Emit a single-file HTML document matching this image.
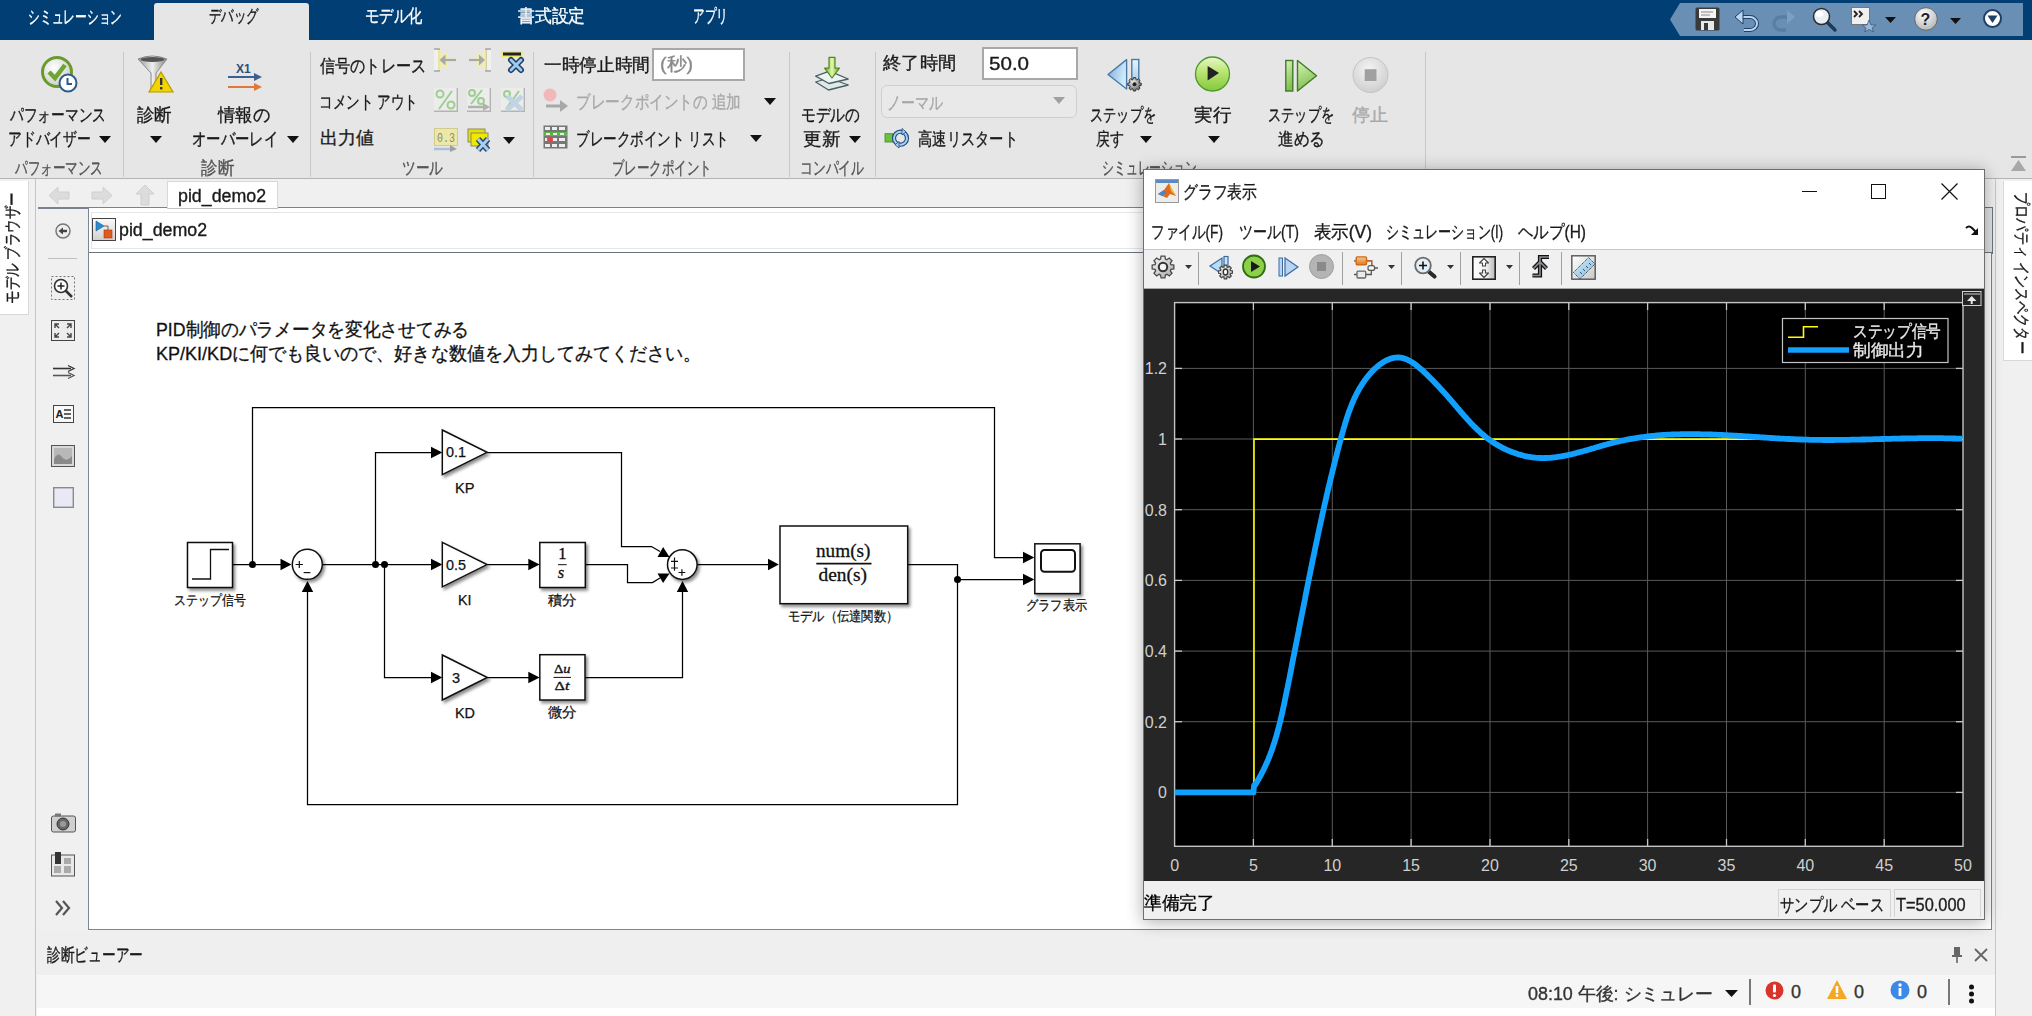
<!DOCTYPE html>
<html><head><meta charset="utf-8">
<style>
html,body{margin:0;padding:0;}
body{width:2032px;height:1016px;position:relative;overflow:hidden;background:#f0f0f0;font-family:"Liberation Sans",sans-serif;}
.a{position:absolute;}
.t{position:absolute;white-space:nowrap;line-height:1;transform-origin:0 0;font-size:18px;color:#1a1a1a;-webkit-text-stroke:0.35px currentColor;}
.g{color:#555;}
.dis{color:#a8a8a8;}
.w{color:#fff;}
svg{position:absolute;overflow:visible;}
</style></head><body>

<!-- ===== TAB BAR ===== -->
<div class="a" style="left:0;top:0;width:2032px;height:40px;background:#003e73"></div>
<div class="a" style="left:154px;top:3px;width:155px;height:37px;background:#e6e6e6;border-radius:3px 3px 0 0"></div>
<div class="t w" style="left: 28px; top: 8px; --w: 94px; transform: scaleX(0.6528);">シミュレーション</div>
<div class="t" style="left: 209px; top: 7px; --w: 50px; transform: scaleX(0.6944);">デバッグ</div>
<div class="t w" style="left: 365px; top: 7px; --w: 57px; transform: scaleX(0.7917);">モデル化</div>
<div class="t w" style="left: 518px; top: 7px; --w: 67px; transform: scaleX(0.9306);">書式設定</div>
<div class="t w" style="left: 693px; top: 7px; --w: 35px; transform: scaleX(0.6481);">アプリ</div>

<!-- quick access -->
<svg style="left:1670px;top:3px" width="353" height="33"><polygon points="0,16.5 10,0 353,0 353,33 10,33" fill="#6a8fb4"></polygon></svg>

<!-- ===== RIBBON ===== -->
<div class="a" style="left:0;top:40px;width:2032px;height:138px;background:#e6e6e6"></div>
<div class="a" style="left:0;top:178px;width:2032px;height:1px;background:#b4b4b4"></div>
<div id="ribbon"></div>
<!-- dividers -->
<div class="a" style="left:123px;top:52px;width:1px;height:125px;background:#c8c8c8"></div>
<div class="a" style="left:310px;top:52px;width:1px;height:125px;background:#c8c8c8"></div>
<div class="a" style="left:533px;top:52px;width:1px;height:125px;background:#c8c8c8"></div>
<div class="a" style="left:789px;top:52px;width:1px;height:125px;background:#c8c8c8"></div>
<div class="a" style="left:875px;top:52px;width:1px;height:125px;background:#c8c8c8"></div>
<div class="a" style="left:1425px;top:52px;width:1px;height:125px;background:#c8c8c8"></div>

<!-- group labels -->
<div class="t g" style="left: 15px; top: 159px; --w: 88px; transform: scaleX(0.6984);">パフォーマンス</div>
<div class="t g" style="left: 201px; top: 159px; --w: 33px; transform: scaleX(0.9167);">診断</div>
<div class="t g" style="left: 402px; top: 159px; --w: 41px; transform: scaleX(0.7593);">ツール</div>
<div class="t g" style="left: 612px; top: 159px; --w: 100px; transform: scaleX(0.6944);">ブレークポイント</div>
<div class="t g" style="left: 800px; top: 159px; --w: 64px; transform: scaleX(0.7111);">コンパイル</div>
<div class="t g" style="left: 1102px; top: 159px; --w: 95px; transform: scaleX(0.6597);">シミュレーション</div>

<!-- パフォーマンス group -->
<svg style="left:41px;top:56px" width="37" height="37" viewBox="0 0 37 37">
 <defs><radialGradient id="pg1" cx="40%" cy="35%" r="65%"><stop offset="0" stop-color="#fff"></stop><stop offset="1" stop-color="#cfcfcf"></stop></radialGradient></defs>
 <circle cx="16" cy="16" r="14.5" fill="url(#pg1)" stroke="#6a9a2c" stroke-width="3"></circle>
 <path d="M8 16 L14 22 L24 9" fill="none" stroke="#6fa530" stroke-width="4.5"></path>
 <circle cx="27" cy="27" r="8.5" fill="#fff" stroke="#2d5c8a" stroke-width="2"></circle>
 <path d="M26.5 22 V28 H31" fill="none" stroke="#2d5c8a" stroke-width="2"></path>
</svg>
<div class="t" style="left: 10px; top: 106px; --w: 96px; transform: scaleX(0.7619);">パフォーマンス</div>
<div class="t" style="left: 8px; top: 129.5px; --w: 83px; transform: scaleX(0.7685);">アドバイザー</div>
<svg style="left:99px;top:136px" width="12" height="7"><polygon points="0,0 12,0 6,7" fill="#111"></polygon></svg>

<!-- 診断 group -->
<svg style="left:137px;top:55px" width="37" height="38" viewBox="0 0 37 38">
 <defs><linearGradient id="fg1" x1="0" x2="1"><stop offset="0" stop-color="#9a9a9a"></stop><stop offset="0.5" stop-color="#eee"></stop><stop offset="1" stop-color="#888"></stop></linearGradient></defs>
 <path d="M1 4 Q15 -2 30 4 L19 18 L19 35 L14 35 L14 18 Z" fill="url(#fg1)" stroke="#8a8a8a" stroke-width="1"></path>
 <ellipse cx="15.5" cy="4.5" rx="12" ry="2.5" fill="#555"></ellipse>
 <polygon points="24,17 36,37 12,37" fill="#f2d500" stroke="#b89a00" stroke-width="1.2"></polygon>
 <rect x="23" y="23" width="2.4" height="7" fill="#333"></rect><rect x="23" y="32" width="2.4" height="2.4" fill="#333"></rect>
</svg>
<div class="t" style="left: 137px; top: 106px; --w: 35px; transform: scaleX(0.9722);">診断</div>
<svg style="left:150px;top:136px" width="12" height="7"><polygon points="0,0 12,0 6,7" fill="#111"></polygon></svg>
<svg style="left:228px;top:62px" width="34" height="30" viewBox="0 0 34 30">
 <text x="8" y="11" font-family="Liberation Sans" font-size="12" font-weight="bold" fill="#2d4f7c">X1</text>
 <line x1="0" y1="15" x2="29" y2="15" stroke="#3b5f93" stroke-width="2"></line><polygon points="26,11 34,15 26,19" fill="#3b5f93"></polygon>
 <line x1="0" y1="25" x2="29" y2="25" stroke="#e07838" stroke-width="2"></line><polygon points="26,21 34,25 26,29" fill="#e07838"></polygon>
</svg>
<div class="t" style="left: 218px; top: 106px; --w: 52px; transform: scaleX(0.963);">情報の</div>
<div class="t" style="left: 192px; top: 129.5px; --w: 86px; transform: scaleX(0.7963);">オーバーレイ</div>
<svg style="left:287px;top:136px" width="12" height="7"><polygon points="0,0 12,0 6,7" fill="#111"></polygon></svg>

<!-- ツール group -->
<div class="t" style="left: 320px; top: 57px; --w: 106px; transform: scaleX(0.8413);">信号のトレース</div>
<div class="t" style="left: 319px; top: 93px; --w: 99px; transform: scaleX(0.7557);">コメント アウト</div>
<div class="t" style="left: 320px; top: 129.4px; --w: 54px; transform: scaleX(1);">出力値</div>
<svg style="left:434px;top:48px" width="24" height="24" viewBox="0 0 24 24">
 <rect x="0" y="1" width="5" height="22" fill="#f0f0f0"></rect>
 <path d="M0 1 H5 V23 H0" fill="none" stroke="#a4a4a4" stroke-width="1.6"></path>
 <g stroke="#f4f0a0" stroke-width="3" stroke-linejoin="round" opacity="0.85"><line x1="10" y1="12" x2="22" y2="12"></line><polygon points="5.5,12 11.5,6 11.5,18" fill="#f4f0a0"></polygon><line x1="5.5" y1="2" x2="5.5" y2="22"></line></g>
 <line x1="10" y1="12" x2="22" y2="12" stroke="#a8a8a8" stroke-width="2.2"></line><polygon points="5.5,12 11.5,6.5 11.5,17.5" fill="#a8a8a8"></polygon>
</svg>
<svg style="left:467px;top:48px" width="24" height="24" viewBox="0 0 24 24">
 <rect x="19" y="1" width="5" height="22" fill="#f0f0f0"></rect>
 <path d="M24 1 H19 V23 H24" fill="none" stroke="#a4a4a4" stroke-width="1.6"></path>
 <g stroke="#f4f0a0" stroke-width="3" stroke-linejoin="round" opacity="0.85"><line x1="2" y1="12" x2="13" y2="12"></line><polygon points="18,12 12,6 12,18" fill="#f4f0a0"></polygon><line x1="18" y1="2" x2="18" y2="22"></line></g>
 <line x1="2" y1="12" x2="13" y2="12" stroke="#a8a8a8" stroke-width="2.2"></line><polygon points="18,12 12,6.5 12,17.5" fill="#a8a8a8"></polygon>
</svg>
<svg style="left:501px;top:50px" width="24" height="22" viewBox="0 0 24 22">
 <rect x="0.5" y="1" width="21" height="6" rx="1.5" fill="#f0e860" opacity="0.9"></rect>
 <rect x="2" y="2.5" width="18" height="3" fill="#222"></rect>
 <path d="M10 10 L20 20 M20 10 L10 20" stroke="#1e3a60" stroke-width="6" stroke-linecap="round"></path>
 <path d="M10 10 L20 20 M20 10 L10 20" stroke="#9ccbec" stroke-width="3" stroke-linecap="round"></path>
</svg>
<svg style="left:434px;top:88px" width="24" height="24" viewBox="0 0 24 24">
 <rect x="0" y="0" width="23.5" height="23.5" fill="#ececec"></rect><path d="M23.3 0 V23.3 H0" fill="none" stroke="#b4b4b4" stroke-width="1.4"></path>
 <circle cx="6" cy="6" r="3.5" fill="none" stroke="#9ccf90" stroke-width="2"></circle><circle cx="17" cy="17" r="3.5" fill="none" stroke="#9ccf90" stroke-width="2"></circle><line x1="18" y1="3" x2="5" y2="21" stroke="#9ccf90" stroke-width="2"></line>
</svg>
<svg style="left:467px;top:88px" width="24" height="24" viewBox="0 0 24 24">
 <rect x="0" y="0" width="23.5" height="23.5" fill="#ececec"></rect><path d="M23.3 0 V23.3 H0" fill="none" stroke="#b4b4b4" stroke-width="1.4"></path>
 <circle cx="5" cy="5" r="3" fill="none" stroke="#9ccf90" stroke-width="2"></circle><circle cx="14" cy="13" r="3" fill="none" stroke="#9ccf90" stroke-width="2"></circle><line x1="15" y1="2" x2="4" y2="16" stroke="#9ccf90" stroke-width="2"></line>
 <line x1="1" y1="19" x2="18" y2="19" stroke="#b0b0b0" stroke-width="2.5"></line><polygon points="23,19 16,15 16,23" fill="#b0b0b0"></polygon>
</svg>
<svg style="left:501px;top:88px" width="24" height="24" viewBox="0 0 24 24">
 <rect x="0" y="0" width="23.5" height="23.5" fill="#ececec"></rect><path d="M23.3 0 V23.3 H0" fill="none" stroke="#b4b4b4" stroke-width="1.4"></path>
 <circle cx="6" cy="6" r="3" fill="none" stroke="#9ccf90" stroke-width="2"></circle><line x1="18" y1="3" x2="5" y2="21" stroke="#9ccf90" stroke-width="2"></line>
 <path d="M6 8 L21 22 M21 8 L6 22" stroke="#c0d4e4" stroke-width="5"></path>
</svg>
<svg style="left:434px;top:128px" width="24" height="24" viewBox="0 0 24 24">
 <rect x="0.5" y="0.5" width="23" height="17" fill="#ece8a8" stroke="#d0cc90"></rect>
 <text x="3" y="14" font-family="Liberation Mono" font-size="13" fill="#8a8a70" textLength="18" lengthAdjust="spacingAndGlyphs">0.3</text>
 <line x1="0" y1="21" x2="18" y2="21" stroke="#a8c0d8" stroke-width="2.5"></line><polygon points="23,21 16,17 16,24" fill="#a0a0a0"></polygon>
</svg>
<svg style="left:467px;top:128px" width="24" height="24" viewBox="0 0 24 24">
 <rect x="1" y="1" width="17" height="13" fill="#e8e000" stroke="#8a8a60"></rect>
 <rect x="4" y="5" width="17" height="13" fill="#f0e800" stroke="#8a8a60"></rect>
 <path d="M11 11 L21 22 M21 11 L11 22" stroke="#2a4a70" stroke-width="6"></path><path d="M11 11 L21 22 M21 11 L11 22" stroke="#a8cff0" stroke-width="3"></path>
</svg>
<svg style="left:503px;top:137px" width="12" height="7"><polygon points="0,0 12,0 6,7" fill="#111"></polygon></svg>

<!-- ブレークポイント group -->
<div class="t" style="left: 544px; top: 55.6px; --w: 106px; transform: scaleX(0.9815);">一時停止時間</div>
<div class="a" style="left:652px;top:48px;width:93px;height:33px;background:#fff;border:2px solid #a8a8a8;box-sizing:border-box"></div>
<div class="t" style="left: 660px; top: 55px; color: rgb(138, 138, 138); --w: 33px; transform: scaleX(1.1);">(秒)</div>
<svg style="left:543px;top:88px" width="26" height="26" viewBox="0 0 26 26">
 <circle cx="7" cy="7" r="6.5" fill="#f0b8b8"></circle>
 <line x1="3" y1="18" x2="19" y2="18" stroke="#a8a8a8" stroke-width="3"></line><polygon points="25,18 17,12 17,24" fill="#a8a8a8"></polygon>
</svg>
<div class="t dis" style="left: 576px; top: 92.8px; --w: 165px; transform: scaleX(0.8128);">ブレークポイントの 追加</div>
<svg style="left:764px;top:98px" width="12" height="7"><polygon points="0,0 12,0 6,7" fill="#111"></polygon></svg>
<svg style="left:543px;top:125px" width="25" height="24" viewBox="0 0 25 24">
 <rect x="0.5" y="0.5" width="24" height="23" fill="#777"></rect>
 <g fill="#eee"><rect x="2" y="2" width="5" height="3"></rect><rect x="9" y="2" width="5" height="3"></rect><rect x="16" y="2" width="6" height="3"></rect>
 <rect x="2" y="13" width="5" height="3"></rect><rect x="9" y="13" width="5" height="3"></rect><rect x="16" y="13" width="6" height="3"></rect>
 <rect x="2" y="19" width="5" height="3"></rect><rect x="9" y="19" width="5" height="3"></rect><rect x="16" y="19" width="6" height="3"></rect></g>
 <rect x="1" y="7" width="23" height="4" fill="#5ab548"></rect>
 <g fill="#eee"><rect x="3" y="8" width="4" height="2"></rect><rect x="10" y="8" width="4" height="2"></rect><rect x="17" y="8" width="4" height="2"></rect></g>
 <circle cx="7" cy="14.5" r="3" fill="#e04848"></circle>
</svg>
<div class="t" style="left: 576px; top: 130px; --w: 153px; transform: scaleX(0.7537);">ブレークポイント リスト</div>
<svg style="left:750px;top:135px" width="12" height="7"><polygon points="0,0 12,0 6,7" fill="#111"></polygon></svg>

<!-- コンパイル group -->
<svg style="left:814px;top:56px" width="36" height="36" viewBox="0 0 36 36">
 <defs><linearGradient id="um1" x1="0" x2="1"><stop offset="0" stop-color="#6aa828"></stop><stop offset="0.5" stop-color="#e4f8b0"></stop><stop offset="1" stop-color="#6aa828"></stop></linearGradient></defs>
 <polygon points="1.7,26 15,22 34.2,29 14.5,34" fill="#dfe8ea" stroke="#4a6060" stroke-width="1.3" stroke-linejoin="round"></polygon>
 <polygon points="1.7,20.1 15.5,15.2 34.2,23 15,27.5" fill="#eef3f4" stroke="#4a6060" stroke-width="1.3" stroke-linejoin="round"></polygon>
 <polygon points="15,1.4 21,1.4 21,12.2 25.4,12.2 18,22 10.6,12.2 15,12.2" fill="url(#um1)" stroke="#4a8a18" stroke-width="1.2" stroke-linejoin="round"></polygon>
</svg>
<div class="t" style="left: 801px; top: 105.6px; --w: 59px; transform: scaleX(0.8194);">モデルの</div>
<div class="t" style="left: 803px; top: 129.5px; --w: 37px; transform: scaleX(1.0278);">更新</div>
<svg style="left:849px;top:136px" width="12" height="7"><polygon points="0,0 12,0 6,7" fill="#111"></polygon></svg>

<!-- 終了時間 -->
<div class="t" style="left: 883px; top: 54.4px; --w: 73px; transform: scaleX(1.0139);">終了時間</div>
<div class="a" style="left:982px;top:47px;width:96px;height:33px;background:#fff;border:2px solid #a8a8a8;box-sizing:border-box"></div>
<div class="t" style="left: 989px; top: 55px; --w: 40px; transform: scaleX(1.1429);">50.0</div>
<div class="a" style="left:881px;top:85px;width:196px;height:33px;background:#e9e9e9;border:1.5px solid #cfcfcf;border-radius:6px;box-sizing:border-box"></div>
<div class="t dis" style="left: 887px; top: 94px; --w: 56px; transform: scaleX(0.7778);">ノーマル</div>
<svg style="left:1053px;top:97px" width="12" height="7"><polygon points="0,0 12,0 6,7" fill="#a0a0a0"></polygon></svg>
<svg style="left:885px;top:128px" width="25" height="21" viewBox="0 0 25 21">
 <rect x="0" y="5.7" width="8" height="8.3" fill="#6cc040" stroke="#3a8a20" stroke-width="0.8"></rect>
 <circle cx="15.5" cy="10.2" r="6.5" fill="none" stroke="#1e4a80" stroke-width="4.2"></circle>
 <circle cx="15.5" cy="10.2" r="6.5" fill="none" stroke="#a8d0f0" stroke-width="2"></circle>
 <polygon points="17,0.5 21,3.8 17,7" fill="#a8d0f0" stroke="#1e4a80" stroke-width="0.8"></polygon>
 <polygon points="14,13.5 10,16.7 14,20" fill="#a8d0f0" stroke="#1e4a80" stroke-width="0.8"></polygon>
</svg>
<div class="t" style="left: 918px; top: 130px; --w: 100px; transform: scaleX(0.7937);">高速リスタート</div>

<!-- シミュレーション group -->
<svg style="left:1106px;top:58px" width="38" height="34" viewBox="0 0 38 34">
 <defs><linearGradient id="sb1" x1="0" y1="0" x2="1" y2="0.3"><stop offset="0" stop-color="#7aaee0"></stop><stop offset="1" stop-color="#d4ecfa"></stop></linearGradient>
 <linearGradient id="sb2" x1="0" y1="0" x2="0" y2="1"><stop offset="0" stop-color="#e8f4fc"></stop><stop offset="1" stop-color="#9cc8ea"></stop></linearGradient>
 <radialGradient id="sbg" cx="40%" cy="35%" r="70%"><stop offset="0" stop-color="#f0f0f0"></stop><stop offset="1" stop-color="#606060"></stop></radialGradient></defs>
 <polygon points="2,16.5 20.6,1.6 20.6,31" fill="url(#sb1)" stroke="#4a7aa8" stroke-width="1.4" stroke-linejoin="round"></polygon>
 <rect x="25.8" y="1.5" width="7" height="27" fill="url(#sb2)" stroke="#4a7aa8" stroke-width="1.4"></rect>
 <path d="M33.28 24.83 L35.19 25.10 L35.19 27.50 L33.28 27.77 L32.92 28.64 L34.08 30.19 L32.39 31.88 L30.84 30.72 L29.97 31.08 L29.70 32.99 L27.30 32.99 L27.03 31.08 L26.16 30.72 L24.61 31.88 L22.92 30.19 L24.08 28.64 L23.72 27.77 L21.81 27.50 L21.81 25.10 L23.72 24.83 L24.08 23.96 L22.92 22.41 L24.61 20.72 L26.16 21.88 L27.03 21.52 L27.30 19.61 L29.70 19.61 L29.97 21.52 L30.84 21.88 L32.39 20.72 L34.08 22.41 L32.92 23.96 Z" fill="url(#sbg)" stroke="#333" stroke-width="1"></path>
 <circle cx="28.5" cy="26.3" r="2" fill="#222"></circle>
</svg>
<div class="t" style="left: 1090px; top: 105.5px; --w: 66px; transform: scaleX(0.7333);">ステップを</div>
<div class="t" style="left: 1096px; top: 129.5px; --w: 28px; transform: scaleX(0.7778);">戻す</div>
<svg style="left:1140px;top:136px" width="12" height="7"><polygon points="0,0 12,0 6,7" fill="#111"></polygon></svg>
<svg style="left:1194px;top:56px" width="38" height="38" viewBox="0 0 38 38">
 <defs><linearGradient id="rg1" x1="0" y1="0" x2="0" y2="1"><stop offset="0" stop-color="#e8f8c8"></stop><stop offset="0.45" stop-color="#b8e470"></stop><stop offset="1" stop-color="#84c83c"></stop></linearGradient></defs>
 <circle cx="18.5" cy="18" r="17" fill="url(#rg1)" stroke="#4a9a2a" stroke-width="1.3"></circle>
 <polygon points="13.6,10 25,17 13.6,24.5" fill="#222"></polygon>
</svg>
<div class="t" style="left: 1194px; top: 105.6px; --w: 37px; transform: scaleX(1.0278);">実行</div>
<svg style="left:1208px;top:136px" width="12" height="7"><polygon points="0,0 12,0 6,7" fill="#111"></polygon></svg>
<svg style="left:1284px;top:59px" width="34" height="34" viewBox="0 0 34 34">
 <defs><linearGradient id="sf1" x1="0" y1="0" x2="0.3" y2="1"><stop offset="0" stop-color="#d8f4b8"></stop><stop offset="1" stop-color="#80c050"></stop></linearGradient></defs>
 <rect x="1.8" y="1.5" width="7" height="30.5" fill="url(#sf1)" stroke="#3e7a28" stroke-width="1.4"></rect>
 <polygon points="13.5,1.5 32.5,16.7 13.5,32" fill="url(#sf1)" stroke="#3e7a28" stroke-width="1.4" stroke-linejoin="round"></polygon>
</svg>
<div class="t" style="left: 1268px; top: 105.5px; --w: 66px; transform: scaleX(0.7333);">ステップを</div>
<div class="t" style="left: 1278px; top: 130px; --w: 47px; transform: scaleX(0.8704);">進める</div>
<svg style="left:1352px;top:57px" width="38" height="37" viewBox="0 0 38 37">
 <defs><radialGradient id="st1" cx="45%" cy="35%" r="65%"><stop offset="0" stop-color="#f4f4f4"></stop><stop offset="1" stop-color="#cfcfcf"></stop></radialGradient></defs>
 <circle cx="18.5" cy="18" r="17.5" fill="url(#st1)" stroke="#c4c4c4" stroke-width="1"></circle>
 <rect x="12.7" y="12.2" width="11.8" height="11.8" fill="#a0a0a0"></rect>
</svg>
<div class="t dis" style="left: 1352px; top: 105.5px; --w: 36px; transform: scaleX(1);">停止</div>

<!-- collapse ribbon icon -->
<svg style="left:2010px;top:156px" width="17" height="16" viewBox="0 0 17 16"><rect x="1" y="0" width="15" height="2" fill="#9a9a9a"></rect><polygon points="8.5,4 16,15 1,15" fill="#a8a8a8"></polygon></svg>


<!-- ===== LEFT TAB ===== -->
<div class="a" style="left:0;top:181px;width:28px;height:133px;background:#fff;border-right:1px solid #d8d8d8;border-bottom:1px solid #d8d8d8"></div>
<div class="a" style="left:35px;top:179px;width:1px;height:837px;background:#c4c4c4"></div>

<!-- ===== EDITOR ===== -->
<div class="a" style="left:36px;top:179px;width:1960px;height:28px;background:#f0f0f0"></div>
<div class="a" style="left:38px;top:207px;width:1955px;height:2px;background:#7a8290"></div>
<div class="a" style="left:167px;top:181px;width:111px;height:28px;background:#fff;border:1px solid #d8d8d8;border-bottom:1px solid #c4c4c4;box-sizing:border-box;z-index:1"></div>
<div class="t" style="left: 178px; top: 187px; font-size: 18px; --w: 88px; z-index: 2; transform: scaleX(0.9888);">pid_demo2</div>
<!-- address bar -->
<div class="a" style="left:88px;top:208px;width:1905px;height:45px;background:#fff;border-left:1px solid #7d8591;box-sizing:border-box"></div>
<div class="a" style="left:91px;top:212px;width:1890px;height:37px;border:1px solid #e6e6e6;border-right:none;box-sizing:border-box"></div>
<div class="a" style="left:1984px;top:207px;width:9px;height:46px;background:#e2e2e2;border:1.5px solid #6e7682;border-left:none;box-sizing:border-box"></div>
<div class="a" style="left:89px;top:252px;width:1904px;height:2px;background:#6b7380"></div>
<div class="t" style="left: 119px; top: 221px; font-size: 18px; --w: 88px; transform: scaleX(0.9888);">pid_demo2</div>
<!-- canvas -->
<div class="a" style="left:88px;top:253px;width:1904px;height:677px;background:#fff;border-left:1px solid #7d8591;border-right:1px solid #7d8591;border-bottom:1px solid #7d8591;box-sizing:border-box"></div>

<!-- ===== RIGHT TAB ===== -->
<div class="a" style="left:1995px;top:179px;width:1px;height:837px;background:#c8c8c8"></div>
<div class="a" style="left:2003px;top:181px;width:29px;height:180px;background:#fff;border-left:1px solid #d8d8d8;border-bottom:1px solid #d8d8d8;box-sizing:border-box"></div>

<!-- ===== DIAGNOSTIC VIEWER ===== -->
<div class="a" style="left:36px;top:930px;width:1959px;height:45px;background:#efefef"></div>
<div class="a" style="left:37px;top:975px;width:1958px;height:33px;background:#f6f6f6"></div>
<div class="a" style="left:37px;top:1008px;width:1958px;height:8px;background:#fff"></div>
<div class="t" style="left: 47px; top: 946px; font-size: 18px; --w: 96px; transform: scaleX(0.7619);">診断ビューアー</div>

<!-- QAT icons -->
<svg style="left:1695px;top:7px" width="25" height="24" viewBox="0 0 25 24">
 <rect x="0.5" y="0.5" width="24" height="23" rx="1.5" fill="#3a3a3a"></rect>
 <rect x="4" y="2" width="17" height="9" fill="#f4f4f4"></rect><line x1="6" y1="5" x2="18" y2="5" stroke="#888"></line><line x1="6" y1="8" x2="15" y2="8" stroke="#888"></line>
 <rect x="6" y="14" width="13" height="9" fill="#e8e8e8"></rect><rect x="9" y="16" width="4" height="7" fill="#3a3a3a"></rect>
</svg>
<svg style="left:1735px;top:10px" width="24" height="20" viewBox="0 0 24 20">
 <path d="M4 7 H15 A7 6.5 0 0 1 15 20 H9" fill="none" stroke="#1e3f66" stroke-width="4"></path>
 <path d="M4 7 H15 A7 6.5 0 0 1 15 20 H9" fill="none" stroke="#b8d8f4" stroke-width="2"></path>
 <polygon points="0,7 8,0 8,14" fill="#b8d8f4" stroke="#1e3f66" stroke-width="1"></polygon>
</svg>
<svg style="left:1773px;top:10px" width="22" height="20" viewBox="0 0 22 20" opacity="0.5">
 <path d="M18 7 H8 A7 6.5 0 0 0 8 20 H13" fill="none" stroke="#4a6f96" stroke-width="3.5"></path>
 <polygon points="22,7 14,0 14,14" fill="#8fb0d0"></polygon>
</svg>
<svg style="left:1812px;top:7px" width="25" height="25" viewBox="0 0 25 25">
 <line x1="14" y1="14" x2="23" y2="23" stroke="#1e3a5a" stroke-width="3.5" stroke-linecap="round"></line>
 <circle cx="9.5" cy="9.5" r="8" fill="#e8eef4" stroke="#2a2a2a" stroke-width="1.5"></circle>
 <ellipse cx="7.5" cy="7" rx="4" ry="3" fill="#fff"></ellipse>
</svg>
<svg style="left:1851px;top:7px" width="25" height="25" viewBox="0 0 25 25">
 <rect x="0.5" y="0.5" width="18" height="17" fill="#f0f0f0" stroke="#777"></rect>
 <path d="M3 4 L6 7 L3 10 M8 4 L11 7 L8 10" fill="none" stroke="#222" stroke-width="1.8"></path>
 <polygon points="18,13 20,18 25,18 21,21 22.5,25 18,22.5 13.5,25 15,21 11,18 16,18" fill="#9ab8d8" stroke="#3a5a80" stroke-width="0.8"></polygon>
</svg>
<svg style="left:1885px;top:17px" width="11" height="6"><polygon points="0,0 11,0 5.5,6" fill="#111"></polygon></svg>
<svg style="left:1914px;top:7px" width="24" height="24" viewBox="0 0 24 24">
 <defs><radialGradient id="hq1" cx="40%" cy="30%" r="70%"><stop offset="0" stop-color="#fff"></stop><stop offset="1" stop-color="#b8b8b8"></stop></radialGradient></defs>
 <circle cx="12" cy="12" r="11.3" fill="url(#hq1)" stroke="#555" stroke-width="0.8"></circle>
 <text x="6.5" y="18" font-family="Liberation Sans" font-weight="bold" font-size="16" fill="#222">?</text>
</svg>
<svg style="left:1950px;top:18px" width="11" height="6"><polygon points="0,0 11,0 5.5,6" fill="#111"></polygon></svg>
<svg style="left:1983px;top:9px" width="19" height="19" viewBox="0 0 19 19">
 <circle cx="9.5" cy="9.5" r="8.5" fill="#fff" stroke="#1e3f66" stroke-width="2"></circle>
 <polygon points="4.5,6.5 14.5,6.5 9.5,14" fill="#1e3f66"></polygon>
</svg>

<!-- left tab text (vertical) -->
<div class="a" style="left:4px;top:304px;transform:rotate(-90deg);transform-origin:0 0"><div class="t" style="left: 0px; top: 0px; font-size: 17px; --w: 112px; transform: scaleX(0.7943);">モデル ブラウザー</div></div>

<!-- breadcrumb arrows -->
<svg style="left:49px;top:187px" width="21" height="17" viewBox="0 0 21 17"><polygon points="0,8.5 9,0 9,5 20,5 20,12 9,12 9,17" fill="#dcdcdc" stroke="#cfcfcf"></polygon></svg>
<svg style="left:91px;top:187px" width="21" height="17" viewBox="0 0 21 17"><polygon points="21,8.5 12,0 12,5 1,5 1,12 12,12 12,17" fill="#dcdcdc" stroke="#cfcfcf"></polygon></svg>
<svg style="left:136px;top:185px" width="18" height="20" viewBox="0 0 18 20"><polygon points="9,0 18,9 13,9 13,20 5,20 5,9 0,9" fill="#dcdcdc" stroke="#cfcfcf"></polygon></svg>

<!-- address bar icons -->
<svg style="left:55px;top:223px" width="16" height="16" viewBox="0 0 16 16"><circle cx="8" cy="8" r="7" fill="#eee" stroke="#777" stroke-width="1.5"></circle><polygon points="3.5,8 8,4.5 8,11.5" fill="#444"></polygon><rect x="7" y="6.8" width="5" height="2.4" fill="#444"></rect></svg>
<div class="a" style="left:91px;top:212px;width:1px;height:36px;background:#e4e4e4"></div>
<svg style="left:92px;top:218px" width="25" height="24" viewBox="0 0 25 24">
 <defs><linearGradient id="mi1" x1="0" y1="0" x2="0" y2="1"><stop offset="0" stop-color="#fafafa"></stop><stop offset="1" stop-color="#d0d0d0"></stop></linearGradient></defs>
 <rect x="0.5" y="0.5" width="23" height="22" fill="url(#mi1)" stroke="#444"></rect>
 <polygon points="4,3 12,8 4,13" fill="#2a8ad0" stroke="#1a5a90" stroke-width="0.6"></polygon><path d="M12 8 H16 V12" fill="none" stroke="#444" stroke-width="0.8"></path>
 <rect x="12" y="12" width="8" height="8" fill="#e05a1a" stroke="#a03a10" stroke-width="0.6"></rect>
</svg>

<!-- palette -->
<div class="a" style="left:48px;top:258px;width:29px;height:1px;background:#c0c0c0"></div>
<svg style="left:51px;top:276px" width="25" height="25" viewBox="0 0 25 25">
 <rect x="0.5" y="0.5" width="23" height="23" fill="none" stroke="#777" stroke-dasharray="2,2"></rect>
 <line x1="13" y1="13" x2="21" y2="21" stroke="#333" stroke-width="2.5"></line>
 <circle cx="10" cy="10" r="6.5" fill="#fff" stroke="#333" stroke-width="1.6"></circle>
 <path d="M10 6.5 V13.5 M6.5 10 H13.5" stroke="#222" stroke-width="1.5"></path>
</svg>
<svg style="left:51px;top:320px" width="24" height="21" viewBox="0 0 24 21">
 <rect x="0.5" y="0.5" width="23" height="20" fill="#ececec" stroke="#444"></rect>
 <path d="M4 8 V4 H8 M4 4 L8 8 M20 8 V4 H16 M20 4 L16 8 M4 13 V17 H8 M4 17 L8 13 M20 13 V17 H16 M20 17 L16 13" fill="none" stroke="#444" stroke-width="1.4"></path>
</svg>
<svg style="left:53px;top:365px" width="22" height="15" viewBox="0 0 22 15">
 <line x1="0" y1="3.5" x2="18" y2="3.5" stroke="#333" stroke-width="1.6"></line><path d="M15 0.5 L21 3.5 L15 6.5" fill="none" stroke="#333" stroke-width="1.3"></path>
 <line x1="0" y1="10.5" x2="18" y2="10.5" stroke="#555" stroke-width="1.6"></line><path d="M15 7.5 L21 10.5 L15 13.5" fill="none" stroke="#555" stroke-width="1.3"></path>
</svg>
<svg style="left:53px;top:405px" width="21" height="18" viewBox="0 0 21 18">
 <rect x="0.5" y="0.5" width="20" height="17" fill="#f8f8f8" stroke="#444"></rect>
 <text x="2.5" y="13" font-family="Liberation Sans" font-weight="bold" font-size="11" fill="#222">A</text>
 <path d="M11 5 H18 M11 9 H18 M11 13 H18" stroke="#333" stroke-width="1.3"></path>
</svg>
<svg style="left:51px;top:445px" width="24" height="22" viewBox="0 0 24 22">
 <rect x="0.5" y="0.5" width="23" height="21" fill="#d8d8d8" stroke="#555"></rect>
 <rect x="3" y="3" width="18" height="16" fill="#b8b8b8"></rect>
 <path d="M3 14 Q7 6 11 12 T21 11 V19 H3 Z" fill="#8a8a8a"></path>
</svg>
<svg style="left:53px;top:487px" width="21" height="21" viewBox="0 0 21 21"><rect x="0.7" y="0.7" width="19.6" height="19.6" fill="#e8e8f6" stroke="#8a8a8a" stroke-width="1.4"></rect></svg>
<svg style="left:51px;top:813px" width="25" height="20" viewBox="0 0 25 20">
 <rect x="0.5" y="3" width="24" height="16" rx="2" fill="#d0d0d0" stroke="#555"></rect>
 <rect x="4" y="0.5" width="6" height="3" fill="#777"></rect>
 <circle cx="12" cy="11" r="6" fill="#666" stroke="#333"></circle><circle cx="12" cy="11" r="3" fill="#999"></circle>
</svg>
<svg style="left:51px;top:852px" width="25" height="25" viewBox="0 0 25 25">
 <rect x="0.5" y="3" width="23" height="21" fill="#e8e8e8" stroke="#555"></rect>
 <rect x="4" y="0" width="6" height="12" fill="#333"></rect><rect x="3" y="14" width="7" height="7" fill="#aaa"></rect>
 <rect x="13" y="6" width="7" height="6" fill="#aaa"></rect><rect x="13" y="14" width="7" height="7" fill="#aaa"></rect>
</svg>
<svg style="left:55px;top:900px" width="16" height="16" viewBox="0 0 16 16"><path d="M1 1 L7 8 L1 15 M8 1 L14 8 L8 15" fill="none" stroke="#555" stroke-width="2.2"></path></svg>

<!-- right tab text (vertical) -->
<div class="a" style="left:2030px;top:192px;transform:rotate(90deg);transform-origin:0 0"><div class="t" style="left: 0px; top: 0px; font-size: 17px; --w: 162px; transform: scaleX(0.7751);">プロパティ インスペクター</div></div>

<!-- diagnostic viewer icons -->
<svg style="left:1951px;top:947px" width="12" height="16" viewBox="0 0 12 16"><rect x="3" y="0" width="6" height="9" fill="#666"></rect><rect x="1" y="8" width="10" height="2" fill="#666"></rect><rect x="5.2" y="10" width="1.6" height="6" fill="#666"></rect></svg>
<svg style="left:1974px;top:948px" width="14" height="14" viewBox="0 0 14 14"><path d="M1 1 L13 13 M13 1 L1 13" stroke="#666" stroke-width="1.8"></path></svg>
<div class="t" style="left: 1528px; top: 985px; font-size: 18px; color: rgb(51, 51, 51); --w: 185px; transform: scaleX(0.9946);">08:10 午後: シミュレー</div>
<svg style="left:1725px;top:990px" width="13" height="7"><polygon points="0,0 13,0 6.5,7" fill="#111"></polygon></svg>
<div class="a" style="left:1749px;top:979px;width:2px;height:26px;background:#777"></div>
<svg style="left:1765px;top:981px" width="19" height="19" viewBox="0 0 19 19"><circle cx="9.5" cy="9.5" r="9" fill="#d9342b"></circle><rect x="8" y="3.5" width="3" height="8" rx="1" fill="#fff"></rect><circle cx="9.5" cy="14.5" r="1.6" fill="#fff"></circle></svg>
<div class="t" style="left: 1791px; top: 983px; font-size: 18px; color: rgb(51, 51, 51); --w: 10px; transform: scaleX(1);">0</div>
<svg style="left:1827px;top:980px" width="20" height="19" viewBox="0 0 20 19"><polygon points="10,0 20,19 0,19" fill="#f5a623"></polygon><rect x="8.7" y="6" width="2.6" height="7" fill="#fff"></rect><circle cx="10" cy="15.5" r="1.4" fill="#fff"></circle></svg>
<div class="t" style="left: 1854px; top: 983px; font-size: 18px; color: rgb(51, 51, 51); --w: 10px; transform: scaleX(1);">0</div>
<svg style="left:1890px;top:980px" width="20" height="20" viewBox="0 0 20 20"><circle cx="10" cy="10" r="9.5" fill="#3c8ae8"></circle><rect x="8.6" y="8" width="2.8" height="8" fill="#fff"></rect><circle cx="10" cy="5" r="1.7" fill="#fff"></circle></svg>
<div class="t" style="left: 1917px; top: 983px; font-size: 18px; color: rgb(51, 51, 51); --w: 10px; transform: scaleX(1);">0</div>
<div class="a" style="left:1948px;top:979px;width:2px;height:26px;background:#777"></div>
<svg style="left:1967px;top:984px" width="9" height="20" viewBox="0 0 9 20"><circle cx="4.5" cy="3" r="2.5" fill="#111"></circle><circle cx="4.5" cy="10" r="2.5" fill="#111"></circle><circle cx="4.5" cy="17" r="2.5" fill="#111"></circle></svg>

<!-- ===== BLOCK DIAGRAM ===== -->
<svg style="left:0;top:0" width="2032" height="1016" viewBox="0 0 2032 1016">
 <defs><filter id="sh" x="-20%" y="-20%" width="150%" height="150%"><feDropShadow dx="2" dy="2.5" stdDeviation="1.6" flood-color="#000" flood-opacity="0.45"></feDropShadow></filter></defs>
 <g font-family="Liberation Sans" fill="#111" stroke="#111" stroke-width="0.3">
  <text x="156" y="335.5" font-size="19" textLength="313" lengthAdjust="spacingAndGlyphs">PID制御のパラメータを変化させてみる</text>
  <text x="156" y="359.5" font-size="19" textLength="545" lengthAdjust="spacingAndGlyphs">KP/KI/KDに何でも良いので、好きな数値を入力してみてください。</text>
 </g>
 <g fill="none" stroke="#000" stroke-width="1.25">
  <path d="M232.6 564.5 H285"></path>
  <path d="M252.5 564.5 V407.5 H994.5 V557.5 H1028"></path>
  <path d="M322.3 564.5 H436"></path>
  <path d="M375.5 564.5 V452.5 H436"></path>
  <path d="M384.5 564.5 V677.5 H436"></path>
  <path d="M487 452.5 H621.5 V546.5 H651.5 L660 551.5"></path>
  <path d="M487 564.5 H534"></path>
  <path d="M585.4 564.5 H627.5 V582.5 H652.5 L660 578"></path>
  <path d="M487.3 677.5 H534"></path>
  <path d="M585 677.5 H682.5 V587"></path>
  <path d="M697 564.5 H773"></path>
  <path d="M907.7 564.5 H957.5 V804.5 H307.5 V587"></path>
  <path d="M957.5 579.5 H1028"></path>
 </g>
 <g fill="#000">
  <circle cx="252.5" cy="564.5" r="3.5"></circle><circle cx="375.5" cy="564.5" r="3.5"></circle><circle cx="384.5" cy="564.5" r="3.5"></circle><circle cx="957.5" cy="579.5" r="3.5"></circle>
  <polygon points="291.5,564.5 280.5,558.8 280.5,570.2"></polygon>
  <polygon points="442.3,452.5 431,446.8 431,458.2"></polygon>
  <polygon points="442.3,564.5 431,558.8 431,570.2"></polygon>
  <polygon points="442.3,677.5 431,671.8 431,683.2"></polygon>
  <polygon points="539.6,564.5 528.3,558.8 528.3,570.2"></polygon>
  <polygon points="539.6,677.5 528.3,671.8 528.3,683.2"></polygon>
  <polygon points="307.5,581 301.8,592 313.2,592"></polygon>
  <polygon points="682.5,581 676.8,592 688.2,592"></polygon>
  <polygon points="778.8,564.5 768,558.8 768,570.2"></polygon>
  <polygon points="1034.3,557.5 1023,551.8 1023,563.2"></polygon>
  <polygon points="1034.3,579.5 1023,573.8 1023,585.2"></polygon>
  <polygon points="663.1,547 657.5,557 669.5,557"></polygon>
  <polygon points="657.5,573.5 669.5,573.5 663.1,583"></polygon>
 </g>
 <g fill="#fff" stroke="#111" stroke-width="1.5" filter="url(#sh)">
  <rect x="187.5" y="542.5" width="45" height="45"></rect>
  <circle cx="307.3" cy="564.3" r="15"></circle>
  <polygon points="442.3,430 487,452.3 442.3,474.6"></polygon>
  <polygon points="442.3,542.3 487,564.6 442.3,586.9"></polygon>
  <polygon points="442.3,655 487.3,677.5 442.3,700"></polygon>
  <rect x="539.8" y="542.5" width="45.5" height="45"></rect>
  <rect x="539.8" y="654.7" width="45.2" height="45.3"></rect>
  <circle cx="682.3" cy="564.6" r="14.8"></circle>
  <rect x="780" y="526" width="127.7" height="77.7"></rect>
  <rect x="1034.8" y="543.8" width="45.3" height="49.8"></rect>
 </g>
 <path d="M192 579 H210.5 V549.5 H229" fill="none" stroke="#111" stroke-width="1.3"></path>
 <rect x="1041" y="550" width="34" height="21.7" rx="3.5" fill="none" stroke="#111" stroke-width="2"></rect>
 <g stroke="#111" stroke-width="1.2" fill="none">
  <path d="M295.6 564.5 H303 M299.3 561 V568"></path>
  <path d="M303.6 572.6 H310.4"></path>
  <path d="M671 561.3 H678 M674.5 557.5 V570.7 M671 568 H678"></path>
  <path d="M678.5 572.5 H685.3 M681.9 569.2 V575.8"></path>
 </g>
 <line x1="816.3" y1="563.7" x2="871.5" y2="563.7" stroke="#111" stroke-width="1.8"></line>
 <line x1="558" y1="564.7" x2="566.7" y2="564.7" stroke="#111" stroke-width="1"></line>
 <line x1="553.5" y1="677.4" x2="571" y2="677.4" stroke="#111" stroke-width="1"></line>
 <g font-family="Liberation Serif" fill="#111">
  <text x="816" y="557" font-size="19.5" stroke="#111" stroke-width="0.3" textLength="54.5" lengthAdjust="spacingAndGlyphs">num(s)</text>
  <text x="818.5" y="580.5" font-size="19.5" stroke="#111" stroke-width="0.3" textLength="48.5" lengthAdjust="spacingAndGlyphs">den(s)</text>
  <text x="558.3" y="558.8" font-size="16.5" stroke="#111" stroke-width="0.35">1</text>
  <text x="557.8" y="578.3" font-size="16.5" font-style="italic" stroke="#111" stroke-width="0.3">s</text>
  <text x="554" y="673.4" font-size="13.5" stroke="#111" stroke-width="0.35" textLength="16.5" lengthAdjust="spacingAndGlyphs">Δ<tspan font-style="italic">u</tspan></text>
  <text x="554.5" y="689.5" font-size="13.5" stroke="#111" stroke-width="0.35" textLength="15" lengthAdjust="spacingAndGlyphs">Δ<tspan font-style="italic">t</tspan></text>
 </g>
 <g font-family="Liberation Sans" fill="#111" stroke="#111" stroke-width="0.25">
  <text x="446" y="457.4" font-size="14.5" textLength="20" lengthAdjust="spacingAndGlyphs">0.1</text>
  <text x="446" y="569.9" font-size="14.5" textLength="20" lengthAdjust="spacingAndGlyphs">0.5</text>
  <text x="452" y="682.5" font-size="14.5">3</text>
  <text x="455" y="492.8" font-size="14" textLength="19.5" lengthAdjust="spacingAndGlyphs">KP</text>
  <text x="458" y="605" font-size="14" textLength="13.5" lengthAdjust="spacingAndGlyphs">KI</text>
  <text x="455" y="718.2" font-size="14" textLength="20" lengthAdjust="spacingAndGlyphs">KD</text>
  <text x="174" y="604.5" font-size="14" textLength="71.5" lengthAdjust="spacingAndGlyphs">ステップ信号</text>
  <text x="547.5" y="604.5" font-size="14" textLength="29" lengthAdjust="spacingAndGlyphs">積分</text>
  <text x="547.5" y="717.3" font-size="14" textLength="29" lengthAdjust="spacingAndGlyphs">微分</text>
  <text x="788" y="621.4" font-size="14" textLength="110" lengthAdjust="spacingAndGlyphs">モデル（伝達関数）</text>
  <text x="1026" y="610" font-size="14" textLength="61" lengthAdjust="spacingAndGlyphs">グラフ表示</text>
 </g>
</svg>

<!-- ===== SCOPE WINDOW ===== -->
<div class="a" style="left:1143px;top:169px;width:842px;height:751px;background:#fff;border:1px solid #6e6e6e;box-sizing:border-box;box-shadow:0 2px 16px rgba(0,0,0,0.32)"></div>
<div class="a" style="left:1144px;top:249px;width:840px;height:40px;background:#f0f0f0;border-top:1px solid #c8c8c8;box-sizing:border-box"></div>
<div class="a" style="left:1144px;top:288px;width:840px;height:1px;background:#a8a8a8"></div>
<div class="a" style="left:1144px;top:289px;width:840px;height:592px;background:#262626"></div>
<div class="a" style="left:1144px;top:881px;width:840px;height:38px;background:#f0f0f0"></div>

<!-- scope title bar -->
<svg style="left:1155px;top:179px" width="24" height="24" viewBox="0 0 24 24">
 <rect x="0.5" y="0.5" width="23" height="23" fill="#ececec" stroke="#9a9a9a"></rect>
 <rect x="1" y="1" width="22" height="3" fill="#5a8ac0"></rect>
 <path d="M3 15 L9 11 L14 4 L17 10 L21 17 L15 15 L12 19 Z" fill="#e06a1a"></path>
 <path d="M3 15 L9 11 L11 14 L7 17 Z" fill="#3a8ad8"></path>
 <path d="M14 4 L17 10 L21 17 L16 12 Z" fill="#f0c030"></path>
</svg>
<div class="t" style="left: 1183px; top: 183px; --w: 74px; transform: scaleX(0.8222);">グラフ表示</div>
<div class="a" style="left:1802px;top:190.5px;width:15px;height:1.2px;background:#111"></div>
<div class="a" style="left:1871px;top:184px;width:14.5px;height:14.5px;border:1.2px solid #111;box-sizing:border-box"></div>
<svg style="left:1941px;top:183px" width="17" height="17" viewBox="0 0 17 17"><path d="M0.5 0.5 L16.5 16.5 M16.5 0.5 L0.5 16.5" stroke="#111" stroke-width="1.2"></path></svg>
<!-- menu -->
<div class="t" style="left: 1151px; top: 223px; --w: 72px; transform: scaleX(0.7579);">ファイル(F)</div>
<div class="t" style="left: 1239px; top: 223px; --w: 60px; transform: scaleX(0.7792);">ツール(T)</div>
<div class="t" style="left: 1314px; top: 223px; --w: 58px; transform: scaleX(0.9667);">表示(V)</div>
<div class="t" style="left: 1386px; top: 223px; --w: 117px; transform: scaleX(0.7267);">シミュレーション(I)</div>
<div class="t" style="left: 1518px; top: 223px; --w: 68px; transform: scaleX(0.8608);">ヘルプ(H)</div>
<svg style="left:1965px;top:225px" width="15" height="12" viewBox="0 0 15 12"><path d="M1 3 Q4 0 7 3 L11 7" fill="none" stroke="#111" stroke-width="2"></path><polygon points="13,10 6,10 13,3" fill="#111"></polygon></svg>
<!-- toolbar -->
<g></g>
<svg style="left:1151px;top:255px" width="24" height="24" viewBox="0 0 24 24">
 <defs><linearGradient id="gr1" x1="0" y1="0" x2="1" y2="1"><stop offset="0" stop-color="#fafafa"></stop><stop offset="1" stop-color="#a8a8a8"></stop></linearGradient></defs>
 <path d="M19.93 9.56 L22.83 10.07 L22.83 13.93 L19.93 14.44 L19.34 15.88 L21.02 18.29 L18.29 21.02 L15.88 19.34 L14.44 19.93 L13.93 22.83 L10.07 22.83 L9.56 19.93 L8.12 19.34 L5.71 21.02 L2.98 18.29 L4.66 15.88 L4.07 14.44 L1.17 13.93 L1.17 10.07 L4.07 9.56 L4.66 8.12 L2.98 5.71 L5.71 2.98 L8.12 4.66 L9.56 4.07 L10.07 1.17 L13.93 1.17 L14.44 4.07 L15.88 4.66 L18.29 2.98 L21.02 5.71 L19.34 8.12 Z" fill="url(#gr1)" stroke="#4a4a4a" stroke-width="1.3"></path>
 <circle cx="12" cy="12" r="4.2" fill="#f4f4f4" stroke="#333" stroke-width="2"></circle>
</svg>
<svg style="left:1185px;top:265px" width="7" height="4"><polygon points="0,0 7,0 3.5,4" fill="#333"></polygon></svg>
<div class="a" style="left:1198px;top:252px;width:1px;height:33px;background:#a0a0a0"></div>
<svg style="left:1209px;top:255px" width="24" height="25" viewBox="0 0 24 25">
 <polygon points="1,11 13,3 13,19" fill="#b8dcf4" stroke="#3a6aa0" stroke-width="1.2"></polygon>
 <rect x="15" y="1.5" width="4" height="14" fill="#c8e4f8" stroke="#3a6aa0" stroke-width="1.2"></rect>
 <path d="M21.47 15.47 L23.39 15.77 L23.39 18.23 L21.47 18.53 L21.10 19.43 L22.24 21.00 L20.50 22.74 L18.93 21.60 L18.03 21.97 L17.73 23.89 L15.27 23.89 L14.97 21.97 L14.07 21.60 L12.50 22.74 L10.76 21.00 L11.90 19.43 L11.53 18.53 L9.61 18.23 L9.61 15.77 L11.53 15.47 L11.90 14.57 L10.76 13.00 L12.50 11.26 L14.07 12.40 L14.97 12.03 L15.27 10.11 L17.73 10.11 L18.03 12.03 L18.93 12.40 L20.50 11.26 L22.24 13.00 L21.10 14.57 Z" fill="url(#gr1)" stroke="#444" stroke-width="1.2"></path>
 <ellipse cx="16.5" cy="17" rx="2.2" ry="3" fill="#fff" stroke="#333" stroke-width="1.4"></ellipse>
</svg>
<svg style="left:1242px;top:254px" width="25" height="26" viewBox="0 0 25 26">
 <circle cx="12" cy="12.5" r="11" fill="#8cd04a" stroke="#2e6e10" stroke-width="1.8"></circle>
 <polygon points="9,7 18,12.5 9,18" fill="#1a1a1a"></polygon>
</svg>
<svg style="left:1278px;top:256px" width="21" height="22" viewBox="0 0 21 22">
 <rect x="1" y="2" width="3.5" height="18" fill="#b8d4f0" stroke="#3a6aa0" stroke-width="1"></rect>
 <polygon points="7,2 20,11 7,20" fill="#b8d4f0" stroke="#3a6aa0" stroke-width="1.2"></polygon>
</svg>
<svg style="left:1309px;top:254px" width="26" height="26" viewBox="0 0 26 26">
 <circle cx="12.5" cy="12.5" r="12" fill="#b4b4b4" stroke="#a0a0a0"></circle>
 <rect x="8" y="8" width="9" height="9" fill="#8a8a8a"></rect>
</svg>
<div class="a" style="left:1342px;top:252px;width:1px;height:33px;background:#a0a0a0"></div>
<svg style="left:1354px;top:255px" width="25" height="25" viewBox="0 0 25 25">
 <defs><linearGradient id="hg1" x1="0" y1="0" x2="0" y2="1"><stop offset="0" stop-color="#f8c890"></stop><stop offset="1" stop-color="#e07a20"></stop></linearGradient></defs>
 <path d="M0 5.8 H2.5 M12.5 5.8 H17.7 V10.8 M20.7 13 H24 M0 19.5 H3 M11.7 19.5 H17.3 V15.3" fill="none" stroke="#555" stroke-width="1.3"></path>
 <path d="M12.5 5.8 H17.7 V10.8" fill="none" stroke="#d06020" stroke-width="1.3"></path>
 <rect x="2.2" y="1.9" width="10.3" height="7.8" rx="1" fill="url(#hg1)" stroke="#d06a10" stroke-width="1.4"></rect>
 <rect x="14" y="10.6" width="6.6" height="4.8" rx="2" fill="#f4f4f4" stroke="#555" stroke-width="1.2"></rect>
 <rect x="3" y="16.1" width="8.7" height="6.9" rx="1" fill="#eaeaea" stroke="#666" stroke-width="1.3"></rect>
</svg>
<svg style="left:1388px;top:265px" width="7" height="4"><polygon points="0,0 7,0 3.5,4" fill="#333"></polygon></svg>
<div class="a" style="left:1401px;top:252px;width:1px;height:33px;background:#a0a0a0"></div>
<svg style="left:1413px;top:255px" width="24" height="24" viewBox="0 0 24 24">
 <line x1="15" y1="16" x2="21.5" y2="21.5" stroke="#2a2a2a" stroke-width="4.2" stroke-linecap="round"></line>
 <circle cx="10" cy="10.5" r="7.8" fill="#e4eef6" stroke="#6a6a6a" stroke-width="1.8"></circle>
 <path d="M10 6.5 V14.5 M6 10.5 H14" stroke="#111" stroke-width="1.6"></path>
</svg>
<svg style="left:1447px;top:265px" width="7" height="4"><polygon points="0,0 7,0 3.5,4" fill="#333"></polygon></svg>
<div class="a" style="left:1460px;top:252px;width:1px;height:33px;background:#a0a0a0"></div>
<svg style="left:1472px;top:256px" width="25" height="24" viewBox="0 0 25 24">
 <defs><linearGradient id="sc1" x1="0" x2="1"><stop offset="0" stop-color="#fff"></stop><stop offset="0.6" stop-color="#f0f0f0"></stop><stop offset="1" stop-color="#b8b8b8"></stop></linearGradient></defs>
 <rect x="0.8" y="0.8" width="22.4" height="22.4" fill="url(#sc1)" stroke="#222" stroke-width="1.6"></rect>
 <path d="M12 2.5 L16.5 7 H13.5 V10 H10.5 V7 H7.5 Z" fill="#fff" stroke="#444" stroke-width="1.1" stroke-linejoin="round"></path>
 <path d="M12 21.5 L16.5 17 H13.5 V14 H10.5 V17 H7.5 Z" fill="#eee" stroke="#444" stroke-width="1.1" stroke-linejoin="round"></path>
</svg>
<svg style="left:1506px;top:265px" width="7" height="4"><polygon points="0,0 7,0 3.5,4" fill="#333"></polygon></svg>
<div class="a" style="left:1519px;top:252px;width:1px;height:33px;background:#a0a0a0"></div>
<svg style="left:1528px;top:252px" width="26" height="28" viewBox="0 0 26 28">
 <path d="M4.5 23.5 H12 V5 H21 M5.5 16.5 L12 10 L18.5 16.5" fill="none" stroke="#111" stroke-width="4.2" stroke-linejoin="miter"></path>
 <path d="M4.5 23.5 H12 V5 H21 M5.5 16.5 L12 10 L18.5 16.5" fill="none" stroke="#8c8c94" stroke-width="1.6"></path>
</svg>
<div class="a" style="left:1561px;top:252px;width:1px;height:33px;background:#a0a0a0"></div>
<svg style="left:1571px;top:255px" width="25" height="25" viewBox="0 0 25 25">
 <defs><linearGradient id="rl1" x1="0" y1="0" x2="1" y2="1"><stop offset="0" stop-color="#fff"></stop><stop offset="1" stop-color="#c8c8c8"></stop></linearGradient>
 <linearGradient id="rl2" x1="0" y1="0" x2="1" y2="1"><stop offset="0" stop-color="#d8eefa"></stop><stop offset="1" stop-color="#7ab8e0"></stop></linearGradient>
 <clipPath id="rlc"><rect x="1" y="1" width="23" height="23"></rect></clipPath></defs>
 <rect x="0.8" y="0.8" width="23.4" height="23.4" fill="url(#rl1)" stroke="#555" stroke-width="1.4"></rect>
 <polygon points="2.5,17.5 17.5,2.5 24,9 9,24" fill="url(#rl2)" stroke="#333" stroke-width="0.9" stroke-dasharray="1.2,0.8" clip-path="url(#rlc)"></polygon>
 <path d="M9 17 L11 19 M12 14 L14 16 M15 11 L17 13 M18 8 L20 10" stroke="#444" stroke-width="0.9"></path>
</svg>
<!-- plot -->
<svg style="left:0;top:0" width="2032" height="1016" viewBox="0 0 2032 1016">
 <rect x="1174.6" y="302.6" width="788.4" height="543.7" fill="#000"></rect>
 <g stroke="#5a5a5a" stroke-width="1"><line x1="1253.4" y1="303" x2="1253.4" y2="846"></line><line x1="1332.3" y1="303" x2="1332.3" y2="846"></line><line x1="1411.1" y1="303" x2="1411.1" y2="846"></line><line x1="1490.0" y1="303" x2="1490.0" y2="846"></line><line x1="1568.8" y1="303" x2="1568.8" y2="846"></line><line x1="1647.6" y1="303" x2="1647.6" y2="846"></line><line x1="1726.5" y1="303" x2="1726.5" y2="846"></line><line x1="1805.3" y1="303" x2="1805.3" y2="846"></line><line x1="1884.2" y1="303" x2="1884.2" y2="846"></line><line x1="1175" y1="792.4" x2="1963" y2="792.4"></line><line x1="1175" y1="721.7" x2="1963" y2="721.7"></line><line x1="1175" y1="651.1" x2="1963" y2="651.1"></line><line x1="1175" y1="580.4" x2="1963" y2="580.4"></line><line x1="1175" y1="509.7" x2="1963" y2="509.7"></line><line x1="1175" y1="439.0" x2="1963" y2="439.0"></line><line x1="1175" y1="368.4" x2="1963" y2="368.4"></line></g>
 <g stroke="#c8c8c8" stroke-width="1.3"><line x1="1253.4" y1="303" x2="1253.4" y2="310"></line><line x1="1253.4" y1="839" x2="1253.4" y2="846"></line><line x1="1332.3" y1="303" x2="1332.3" y2="310"></line><line x1="1332.3" y1="839" x2="1332.3" y2="846"></line><line x1="1411.1" y1="303" x2="1411.1" y2="310"></line><line x1="1411.1" y1="839" x2="1411.1" y2="846"></line><line x1="1490.0" y1="303" x2="1490.0" y2="310"></line><line x1="1490.0" y1="839" x2="1490.0" y2="846"></line><line x1="1568.8" y1="303" x2="1568.8" y2="310"></line><line x1="1568.8" y1="839" x2="1568.8" y2="846"></line><line x1="1647.6" y1="303" x2="1647.6" y2="310"></line><line x1="1647.6" y1="839" x2="1647.6" y2="846"></line><line x1="1726.5" y1="303" x2="1726.5" y2="310"></line><line x1="1726.5" y1="839" x2="1726.5" y2="846"></line><line x1="1805.3" y1="303" x2="1805.3" y2="310"></line><line x1="1805.3" y1="839" x2="1805.3" y2="846"></line><line x1="1884.2" y1="303" x2="1884.2" y2="310"></line><line x1="1884.2" y1="839" x2="1884.2" y2="846"></line><line x1="1175" y1="792.4" x2="1182" y2="792.4"></line><line x1="1956" y1="792.4" x2="1963" y2="792.4"></line><line x1="1175" y1="721.7" x2="1182" y2="721.7"></line><line x1="1956" y1="721.7" x2="1963" y2="721.7"></line><line x1="1175" y1="651.1" x2="1182" y2="651.1"></line><line x1="1956" y1="651.1" x2="1963" y2="651.1"></line><line x1="1175" y1="580.4" x2="1182" y2="580.4"></line><line x1="1956" y1="580.4" x2="1963" y2="580.4"></line><line x1="1175" y1="509.7" x2="1182" y2="509.7"></line><line x1="1956" y1="509.7" x2="1963" y2="509.7"></line><line x1="1175" y1="439.0" x2="1182" y2="439.0"></line><line x1="1956" y1="439.0" x2="1963" y2="439.0"></line><line x1="1175" y1="368.4" x2="1182" y2="368.4"></line><line x1="1956" y1="368.4" x2="1963" y2="368.4"></line></g>
 <rect x="1174.6" y="302.6" width="788.4" height="543.7" fill="none" stroke="#c4c4c4" stroke-width="1.4"></rect>
 <path d="M1174.6 792.4 H1254 V439.1 H1963" fill="none" stroke="#ffff00" stroke-width="1.6"></path>
 <path d="M1174.6 792.4 H1253.4 L1254.1 785.2 L1254.6 785.6 L1255.5 784.3 L1256.3 783.0 L1257.1 781.6 L1257.9 780.3 L1258.7 779.0 L1259.4 777.6 L1260.2 776.3 L1260.9 775.0 L1261.6 773.6 L1262.3 772.2 L1263.0 770.9 L1263.7 769.5 L1264.3 768.1 L1265.0 766.8 L1265.6 765.4 L1266.2 764.0 L1266.9 762.6 L1267.5 761.2 L1268.1 759.8 L1268.6 758.4 L1269.2 757.0 L1269.8 755.6 L1270.3 754.2 L1270.8 752.7 L1271.4 751.3 L1271.9 749.9 L1272.4 748.5 L1272.9 747.0 L1273.3 745.6 L1273.8 744.1 L1274.3 742.7 L1274.8 741.2 L1275.2 739.8 L1275.6 738.3 L1276.1 736.9 L1276.5 735.4 L1276.9 734.0 L1277.3 732.5 L1277.7 731.0 L1278.1 729.6 L1278.5 728.1 L1278.9 726.6 L1279.3 725.1 L1279.7 723.6 L1280.0 722.2 L1280.4 720.7 L1280.7 719.2 L1281.1 717.7 L1281.4 716.2 L1281.8 714.7 L1282.1 713.2 L1282.5 711.7 L1282.8 710.2 L1283.1 708.7 L1283.4 707.2 L1283.8 705.7 L1284.1 704.2 L1284.4 702.7 L1284.7 701.2 L1285.0 699.7 L1285.3 698.2 L1285.6 696.7 L1285.9 695.2 L1286.2 693.7 L1286.5 692.2 L1286.8 690.7 L1287.2 689.2 L1287.5 687.7 L1287.8 686.2 L1288.1 684.7 L1288.4 683.2 L1288.7 681.7 L1289.0 680.2 L1289.3 678.7 L1289.6 677.2 L1289.9 675.7 L1290.2 674.1 L1290.5 672.6 L1290.8 671.1 L1291.1 669.6 L1291.4 668.1 L1291.7 666.6 L1291.9 665.1 L1292.2 663.6 L1292.5 662.1 L1292.8 660.6 L1293.1 659.1 L1293.4 657.6 L1293.7 656.1 L1294.0 654.6 L1294.3 653.1 L1294.6 651.6 L1294.9 650.1 L1295.2 648.5 L1295.5 647.0 L1295.8 645.5 L1296.1 644.0 L1296.4 642.5 L1296.7 641.0 L1297.0 639.5 L1297.3 638.0 L1297.6 636.5 L1297.9 635.0 L1298.2 633.5 L1298.5 632.0 L1298.8 630.5 L1299.0 629.0 L1299.3 627.5 L1299.6 626.0 L1299.9 624.5 L1300.2 623.0 L1300.5 621.5 L1300.8 620.0 L1301.1 618.5 L1301.4 617.0 L1301.7 615.5 L1302.0 614.0 L1302.3 612.5 L1302.6 611.0 L1302.9 609.5 L1303.2 608.0 L1303.5 606.5 L1303.8 605.0 L1304.1 603.5 L1304.4 602.0 L1304.7 600.5 L1305.0 599.0 L1305.2 597.5 L1305.5 596.0 L1305.8 594.5 L1306.1 593.0 L1306.4 591.5 L1306.7 590.0 L1307.0 588.5 L1307.3 587.0 L1307.6 585.5 L1307.9 584.0 L1308.2 582.5 L1308.5 581.0 L1308.8 579.5 L1309.1 578.0 L1309.4 576.5 L1309.7 575.0 L1310.0 573.5 L1310.3 572.0 L1310.6 570.5 L1310.9 569.1 L1311.2 567.6 L1311.5 566.1 L1311.8 564.6 L1312.1 563.1 L1312.4 561.6 L1312.7 560.1 L1313.1 558.6 L1313.4 557.1 L1313.7 555.6 L1314.0 554.1 L1314.3 552.7 L1314.6 551.2 L1314.9 549.7 L1315.2 548.2 L1315.5 546.7 L1315.8 545.2 L1316.1 543.7 L1316.5 542.2 L1316.8 540.7 L1317.1 539.2 L1317.4 537.8 L1317.7 536.3 L1318.0 534.8 L1318.3 533.3 L1318.7 531.8 L1319.0 530.3 L1319.3 528.8 L1319.6 527.3 L1319.9 525.8 L1320.3 524.4 L1320.6 522.9 L1320.9 521.4 L1321.2 519.9 L1321.6 518.4 L1321.9 516.9 L1322.2 515.4 L1322.5 513.9 L1322.9 512.5 L1323.2 511.0 L1323.5 509.5 L1323.9 508.0 L1324.2 506.5 L1324.5 505.0 L1324.9 503.5 L1325.2 502.0 L1325.6 500.5 L1325.9 499.1 L1326.2 497.6 L1326.6 496.1 L1326.9 494.6 L1327.3 493.1 L1327.6 491.6 L1328.0 490.1 L1328.3 488.6 L1328.7 487.1 L1329.0 485.6 L1329.4 484.2 L1329.7 482.7 L1330.1 481.2 L1330.4 479.7 L1330.8 478.2 L1331.2 476.7 L1331.5 475.2 L1331.9 473.7 L1332.3 472.2 L1332.6 470.7 L1333.0 469.2 L1333.4 467.7 L1333.7 466.2 L1334.1 464.8 L1334.5 463.3 L1334.9 461.8 L1335.2 460.3 L1335.6 458.8 L1336.0 457.3 L1336.4 455.8 L1336.8 454.3 L1337.1 452.8 L1337.5 451.3 L1337.9 449.8 L1338.3 448.3 L1338.7 446.8 L1339.1 445.3 L1339.5 443.8 L1339.9 442.3 L1340.3 440.8 L1340.7 439.3 L1341.1 437.8 L1341.5 436.3 L1341.9 434.8 L1342.3 433.3 L1342.7 431.8 L1343.2 430.3 L1343.6 428.8 L1344.0 427.3 L1344.5 425.8 L1344.9 424.3 L1345.3 422.8 L1345.8 421.4 L1346.3 419.9 L1346.7 418.4 L1347.2 416.9 L1347.7 415.5 L1348.2 414.0 L1348.7 412.5 L1349.2 411.1 L1349.8 409.6 L1350.3 408.2 L1350.9 406.8 L1351.4 405.3 L1352.0 403.9 L1352.6 402.5 L1353.2 401.1 L1353.8 399.7 L1354.4 398.3 L1355.1 396.9 L1355.8 395.6 L1356.4 394.2 L1357.1 392.8 L1357.9 391.5 L1358.6 390.2 L1359.3 388.8 L1360.1 387.5 L1360.9 386.2 L1361.7 384.9 L1362.5 383.7 L1363.4 382.4 L1364.2 381.2 L1365.1 379.9 L1366.0 378.7 L1367.0 377.5 L1367.9 376.3 L1368.9 375.1 L1369.9 373.9 L1370.9 372.8 L1372.0 371.6 L1373.0 370.5 L1374.1 369.4 L1375.2 368.4 L1376.4 367.4 L1377.5 366.4 L1378.7 365.4 L1379.9 364.5 L1381.1 363.6 L1382.3 362.8 L1383.5 362.0 L1384.8 361.3 L1386.0 360.6 L1387.3 360.0 L1388.6 359.5 L1389.8 359.0 L1391.1 358.5 L1392.4 358.2 L1393.8 357.9 L1395.1 357.7 L1396.4 357.6 L1397.7 357.5 L1399.1 357.5 L1400.4 357.7 L1401.8 357.9 L1403.1 358.2 L1404.5 358.6 L1405.8 359.0 L1407.2 359.6 L1408.5 360.3 L1409.9 361.0 L1411.2 361.7 L1412.6 362.6 L1413.9 363.5 L1415.2 364.4 L1416.5 365.4 L1417.8 366.5 L1419.1 367.6 L1420.4 368.7 L1421.7 369.8 L1423.0 370.9 L1424.2 372.1 L1425.4 373.3 L1426.7 374.4 L1427.9 375.6 L1429.0 376.8 L1430.2 377.9 L1431.3 379.1 L1432.5 380.2 L1433.6 381.3 L1434.7 382.5 L1435.7 383.6 L1436.8 384.7 L1437.9 385.8 L1438.9 386.9 L1439.9 388.0 L1440.9 389.1 L1441.9 390.2 L1442.9 391.3 L1443.9 392.3 L1444.9 393.4 L1445.9 394.5 L1446.9 395.6 L1447.9 396.7 L1448.8 397.9 L1449.8 399.0 L1450.8 400.1 L1451.8 401.2 L1452.7 402.4 L1453.7 403.5 L1454.7 404.7 L1455.7 405.8 L1456.7 407.0 L1457.6 408.1 L1458.6 409.3 L1459.6 410.4 L1460.6 411.6 L1461.6 412.8 L1462.6 413.9 L1463.6 415.1 L1464.6 416.2 L1465.7 417.4 L1466.7 418.5 L1467.7 419.7 L1468.8 420.8 L1469.8 421.9 L1470.9 423.1 L1471.9 424.2 L1473.0 425.3 L1474.1 426.4 L1475.2 427.5 L1476.3 428.5 L1477.4 429.6 L1478.5 430.7 L1479.6 431.7 L1480.8 432.8 L1481.9 433.8 L1483.1 434.8 L1484.3 435.8 L1485.5 436.7 L1486.7 437.7 L1487.9 438.6 L1489.1 439.5 L1490.4 440.4 L1491.7 441.3 L1492.9 442.2 L1494.2 443.0 L1495.5 443.9 L1496.8 444.7 L1498.2 445.4 L1499.5 446.2 L1500.9 446.9 L1502.2 447.7 L1503.6 448.4 L1505.0 449.0 L1506.3 449.7 L1507.7 450.3 L1509.2 450.9 L1510.6 451.5 L1512.0 452.1 L1513.4 452.6 L1514.9 453.1 L1516.3 453.6 L1517.7 454.1 L1519.2 454.5 L1520.7 454.9 L1522.1 455.3 L1523.6 455.7 L1525.1 456.1 L1526.5 456.4 L1528.0 456.7 L1529.5 456.9 L1531.0 457.2 L1532.5 457.4 L1534.0 457.5 L1535.4 457.7 L1536.9 457.8 L1538.4 457.9 L1539.9 458.0 L1541.4 458.0 L1542.9 458.1 L1544.4 458.0 L1545.9 458.0 L1547.4 457.9 L1548.9 457.9 L1550.3 457.8 L1551.8 457.6 L1553.3 457.5 L1554.8 457.3 L1556.3 457.1 L1557.8 456.9 L1559.3 456.7 L1560.8 456.5 L1562.3 456.2 L1563.8 455.9 L1565.3 455.6 L1566.7 455.3 L1568.2 455.0 L1569.7 454.7 L1571.2 454.3 L1572.7 454.0 L1574.2 453.6 L1575.7 453.2 L1577.2 452.8 L1578.7 452.4 L1580.2 452.0 L1581.7 451.6 L1583.2 451.2 L1584.7 450.8 L1586.2 450.4 L1587.7 449.9 L1589.2 449.5 L1590.6 449.1 L1592.1 448.6 L1593.6 448.2 L1595.1 447.7 L1596.6 447.3 L1598.1 446.9 L1599.6 446.4 L1601.1 446.0 L1602.6 445.6 L1604.1 445.1 L1605.6 444.7 L1607.1 444.3 L1608.6 443.9 L1610.1 443.5 L1611.6 443.1 L1613.1 442.7 L1614.6 442.3 L1616.1 442.0 L1617.7 441.6 L1619.2 441.3 L1620.7 440.9 L1622.2 440.6 L1623.7 440.3 L1625.2 440.0 L1626.7 439.7 L1628.2 439.4 L1629.7 439.1 L1631.2 438.8 L1632.7 438.6 L1634.2 438.3 L1635.7 438.1 L1637.3 437.8 L1638.8 437.6 L1640.3 437.4 L1641.8 437.2 L1643.3 437.0 L1644.8 436.8 L1646.3 436.6 L1647.8 436.4 L1649.4 436.2 L1650.9 436.1 L1652.4 435.9 L1653.9 435.8 L1655.4 435.6 L1656.9 435.5 L1658.4 435.4 L1660.0 435.2 L1661.5 435.1 L1663.0 435.0 L1664.5 434.9 L1666.0 434.8 L1667.5 434.7 L1669.1 434.7 L1670.6 434.6 L1672.1 434.5 L1673.6 434.5 L1675.1 434.4 L1676.7 434.4 L1678.2 434.3 L1679.7 434.3 L1681.2 434.2 L1682.8 434.2 L1684.3 434.2 L1685.8 434.2 L1687.3 434.2 L1688.8 434.2 L1690.4 434.1 L1691.9 434.1 L1693.4 434.2 L1694.9 434.2 L1696.5 434.2 L1698.0 434.2 L1699.5 434.2 L1701.0 434.3 L1702.6 434.3 L1704.1 434.3 L1705.6 434.4 L1707.1 434.4 L1708.7 434.4 L1710.2 434.5 L1711.7 434.5 L1713.2 434.6 L1714.8 434.7 L1716.3 434.7 L1717.8 434.8 L1719.4 434.9 L1720.9 434.9 L1722.4 435.0 L1723.9 435.1 L1725.5 435.2 L1727.0 435.2 L1728.5 435.3 L1730.0 435.4 L1731.6 435.5 L1733.1 435.6 L1734.6 435.7 L1736.2 435.7 L1737.7 435.8 L1739.2 435.9 L1740.8 436.0 L1742.3 436.1 L1743.8 436.2 L1745.3 436.3 L1746.9 436.4 L1748.4 436.5 L1749.9 436.6 L1751.5 436.7 L1753.0 436.8 L1754.5 436.9 L1756.1 437.0 L1757.6 437.1 L1759.1 437.2 L1760.6 437.3 L1762.2 437.4 L1763.7 437.5 L1765.2 437.6 L1766.8 437.7 L1768.3 437.8 L1769.8 437.9 L1771.4 438.0 L1772.9 438.1 L1774.4 438.2 L1776.0 438.3 L1777.5 438.4 L1779.0 438.5 L1780.6 438.6 L1782.1 438.6 L1783.6 438.7 L1785.1 438.8 L1786.7 438.9 L1788.2 439.0 L1789.7 439.0 L1791.3 439.1 L1792.8 439.2 L1794.3 439.2 L1795.9 439.3 L1797.4 439.4 L1798.9 439.4 L1800.5 439.5 L1802.0 439.5 L1803.5 439.6 L1805.0 439.6 L1806.6 439.7 L1808.1 439.7 L1809.6 439.8 L1811.2 439.8 L1812.7 439.8 L1814.2 439.9 L1815.8 439.9 L1817.3 439.9 L1818.8 439.9 L1820.3 439.9 L1821.9 439.9 L1823.4 440.0 L1824.9 440.0 L1826.5 440.0 L1828.0 440.0 L1829.5 440.0 L1831.1 440.0 L1832.6 440.0 L1834.1 440.0 L1835.6 439.9 L1837.2 439.9 L1838.7 439.9 L1840.2 439.9 L1841.8 439.9 L1843.3 439.9 L1844.8 439.8 L1846.3 439.8 L1847.9 439.8 L1849.4 439.8 L1850.9 439.7 L1852.5 439.7 L1854.0 439.7 L1855.5 439.7 L1857.0 439.6 L1858.6 439.6 L1860.1 439.6 L1861.6 439.5 L1863.2 439.5 L1864.7 439.5 L1866.2 439.4 L1867.8 439.4 L1869.3 439.3 L1870.8 439.3 L1872.3 439.3 L1873.9 439.2 L1875.4 439.2 L1876.9 439.1 L1878.5 439.1 L1880.0 439.1 L1881.5 439.0 L1883.0 439.0 L1884.6 438.9 L1886.1 438.9 L1887.6 438.9 L1889.2 438.8 L1890.7 438.8 L1892.2 438.7 L1893.7 438.7 L1895.3 438.7 L1896.8 438.6 L1898.3 438.6 L1899.9 438.6 L1901.4 438.5 L1902.9 438.5 L1904.4 438.5 L1906.0 438.4 L1907.5 438.4 L1909.0 438.4 L1910.6 438.3 L1912.1 438.3 L1913.6 438.3 L1915.2 438.3 L1916.7 438.3 L1918.2 438.2 L1919.7 438.2 L1921.3 438.2 L1922.8 438.2 L1924.3 438.2 L1925.9 438.2 L1927.4 438.2 L1928.9 438.2 L1930.5 438.2 L1932.0 438.2 L1933.5 438.2 L1935.0 438.2 L1936.6 438.2 L1938.1 438.2 L1939.6 438.2 L1941.2 438.2 L1942.7 438.2 L1944.2 438.3 L1945.8 438.3 L1947.3 438.3 L1948.8 438.3 L1950.4 438.4 L1951.9 438.4 L1953.4 438.5 L1955.0 438.5 L1956.5 438.6 L1958.0 438.6 L1959.6 438.7 L1961.1 438.7 L1962.6 438.8" fill="none" stroke="#12a0ff" stroke-width="5.8" stroke-linejoin="round"></path>
 <g font-family="Liberation Sans" font-size="16" fill="#d0d0d0"><text x="1167" y="798.2" text-anchor="end">0</text><text x="1167" y="727.5" text-anchor="end">0.2</text><text x="1167" y="656.9" text-anchor="end">0.4</text><text x="1167" y="586.2" text-anchor="end">0.6</text><text x="1167" y="515.5" text-anchor="end">0.8</text><text x="1167" y="444.8" text-anchor="end">1</text><text x="1167" y="374.2" text-anchor="end">1.2</text><text x="1174.6" y="870.6" text-anchor="middle">0</text><text x="1253.4" y="870.6" text-anchor="middle">5</text><text x="1332.3" y="870.6" text-anchor="middle">10</text><text x="1411.1" y="870.6" text-anchor="middle">15</text><text x="1490.0" y="870.6" text-anchor="middle">20</text><text x="1568.8" y="870.6" text-anchor="middle">25</text><text x="1647.6" y="870.6" text-anchor="middle">30</text><text x="1726.5" y="870.6" text-anchor="middle">35</text><text x="1805.3" y="870.6" text-anchor="middle">40</text><text x="1884.2" y="870.6" text-anchor="middle">45</text><text x="1963.0" y="870.6" text-anchor="middle">50</text></g>
 <rect x="1782.5" y="318.5" width="165.5" height="44" fill="#000" stroke="#c4c4c4" stroke-width="1.2"></rect>
 <path d="M1788 337.3 H1803.5 V326.8 H1818" fill="none" stroke="#ffff00" stroke-width="1.6"></path>
 <line x1="1788" y1="350" x2="1849" y2="350" stroke="#12a0ff" stroke-width="5.5"></line>
 <rect x="1962.5" y="291.5" width="18.5" height="14" fill="#262626" stroke="#d0d0d0" stroke-width="1"></rect>
 <path d="M1964 294 H1980" stroke="#d0d0d0"></path>
 <polygon points="1971.7,296 1967,301 1976.5,301" fill="#e8e8e8"></polygon><rect x="1970.7" y="300" width="2" height="4" fill="#e8e8e8"></rect>
</svg>
<div class="t" style="left: 1853px; top: 323px; font-size: 17px; color: rgb(232, 232, 232); --w: 88px; transform: scaleX(0.8627);">ステップ信号</div>
<div class="t" style="left: 1853px; top: 342px; font-size: 17px; color: rgb(232, 232, 232); --w: 71px; transform: scaleX(1.0441);">制御出力</div>
<!-- status bar -->
<div class="t" style="left: 1144px; top: 894px; color: rgb(0, 0, 0); --w: 71px; transform: scaleX(0.9861);">準備完了</div>
<div class="a" style="left:1778px;top:889px;width:113px;height:28px;border:1px solid #d4d4d4;border-bottom:none;box-sizing:border-box"></div>
<div class="a" style="left:1894px;top:889px;width:87px;height:28px;border:1px solid #d4d4d4;border-bottom:none;box-sizing:border-box"></div>
<div class="t" style="left: 1780px; top: 896px; --w: 104px; transform: scaleX(0.7939);">サンプル ベース</div>
<div class="t" style="left: 1896px; top: 896px; --w: 70px; transform: scaleX(0.9091);">T=50.000</div>



</body></html>
